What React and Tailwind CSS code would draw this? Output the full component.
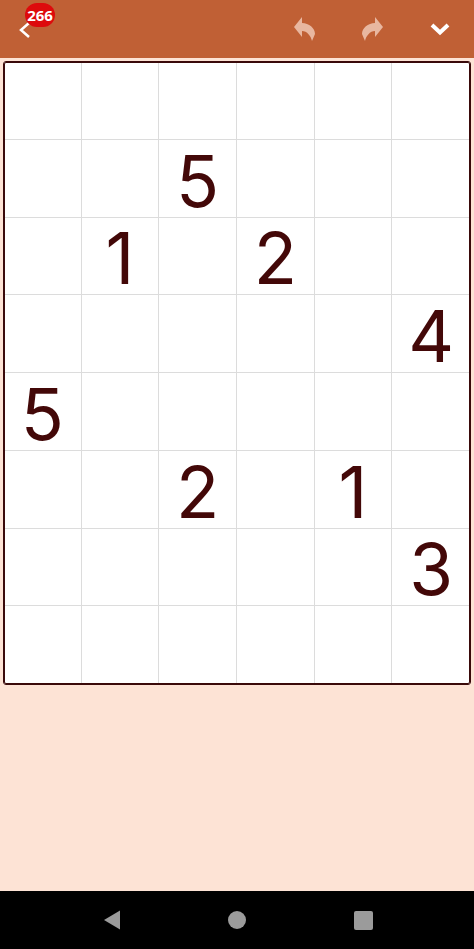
const cells = {
  "1-2": 5,
  "2-1": 1,
  "2-3": 2,
  "3-5": 4,
  "4-0": 5,
  "5-2": 2,
  "5-4": 1,
  "6-5": 3,
};

const rows = [0, 1, 2, 3, 4, 5, 6, 7];
const cols = [0, 1, 2, 3, 4, 5];

function UndoIcon({ flip }) {
  return (
    <svg width="22" height="26" viewBox="0 0 22 26" className={flip ? "-scale-x-100" : ""}>
      <path d="M0 11 L8 1 V7 C15 7 21 12 21 18 L18 25 C17 20 13 15 8 15 V21 Z" fill="#e8b7a0" />
    </svg>
  );
}

export default function App() {
  return (
    <div className="flex flex-col h-[949px] bg-[#fde3d5] font-['Inter',sans-serif] overflow-hidden">
      <header className="relative flex items-center h-[58px] bg-[#c06035] shrink-0">
        <svg width="14" height="18" viewBox="0 0 14 18" className="ml-[18px] mt-[1px]">
          <path d="M11 2 L3 9 L11 16" fill="none" stroke="#fff" strokeWidth="2.5" />
        </svg>
        <span className="absolute left-[25px] top-[3px] flex items-center justify-center w-[30px] h-[24px] rounded-full bg-[#dd0a0c] text-white text-[15px] font-bold font-['Open_Sans',sans-serif]">
          266
        </span>
        <div className="flex items-center ml-auto mr-[23px]">
          <UndoIcon />
          <div className="ml-[45px]">
            <UndoIcon flip />
          </div>
          <svg width="22" height="14" viewBox="0 0 22 14" className="ml-[46px] -mt-[1px]">
            <path d="M3 3 L11 10.5 L19 3" fill="none" stroke="#fff" strokeWidth="4" />
          </svg>
        </div>
      </header>

      <div className="flex-1 px-[3px] pt-[3px]">
        <div className="grid grid-cols-6 grid-rows-8 w-[468px] h-[624px] bg-white border border-[#3a0a0a] outline outline-[#3a0a0a] -outline-offset-2 rounded-[3px]">
          {rows.map((r) =>
            cols.map((c) => (
              <div
                key={`${r}-${c}`}
                className={`flex items-center justify-center pt-[6px] text-[71px] leading-none text-[#430808] border-[#dcdcdc] ${c < 5 ? "border-r" : ""} ${r < 7 ? "border-b" : ""}`}
              >
                {cells[`${r}-${c}`]}
              </div>
            ))
          )}
        </div>
      </div>

      <nav className="relative flex items-center h-[58px] bg-black shrink-0">
        <svg width="18" height="20" viewBox="0 0 18 20" className="ml-[103px]">
          <path d="M1 10 L17 0.5 V19.5 Z" fill="#9b9b9b" />
        </svg>
        <div className="w-[18px] h-[18px] ml-[107px] rounded-full bg-[#9b9b9b]" />
        <div className="w-[19px] h-[19px] ml-[108px] rounded-[2px] bg-[#9b9b9b]" />
      </nav>
    </div>
  );
}
